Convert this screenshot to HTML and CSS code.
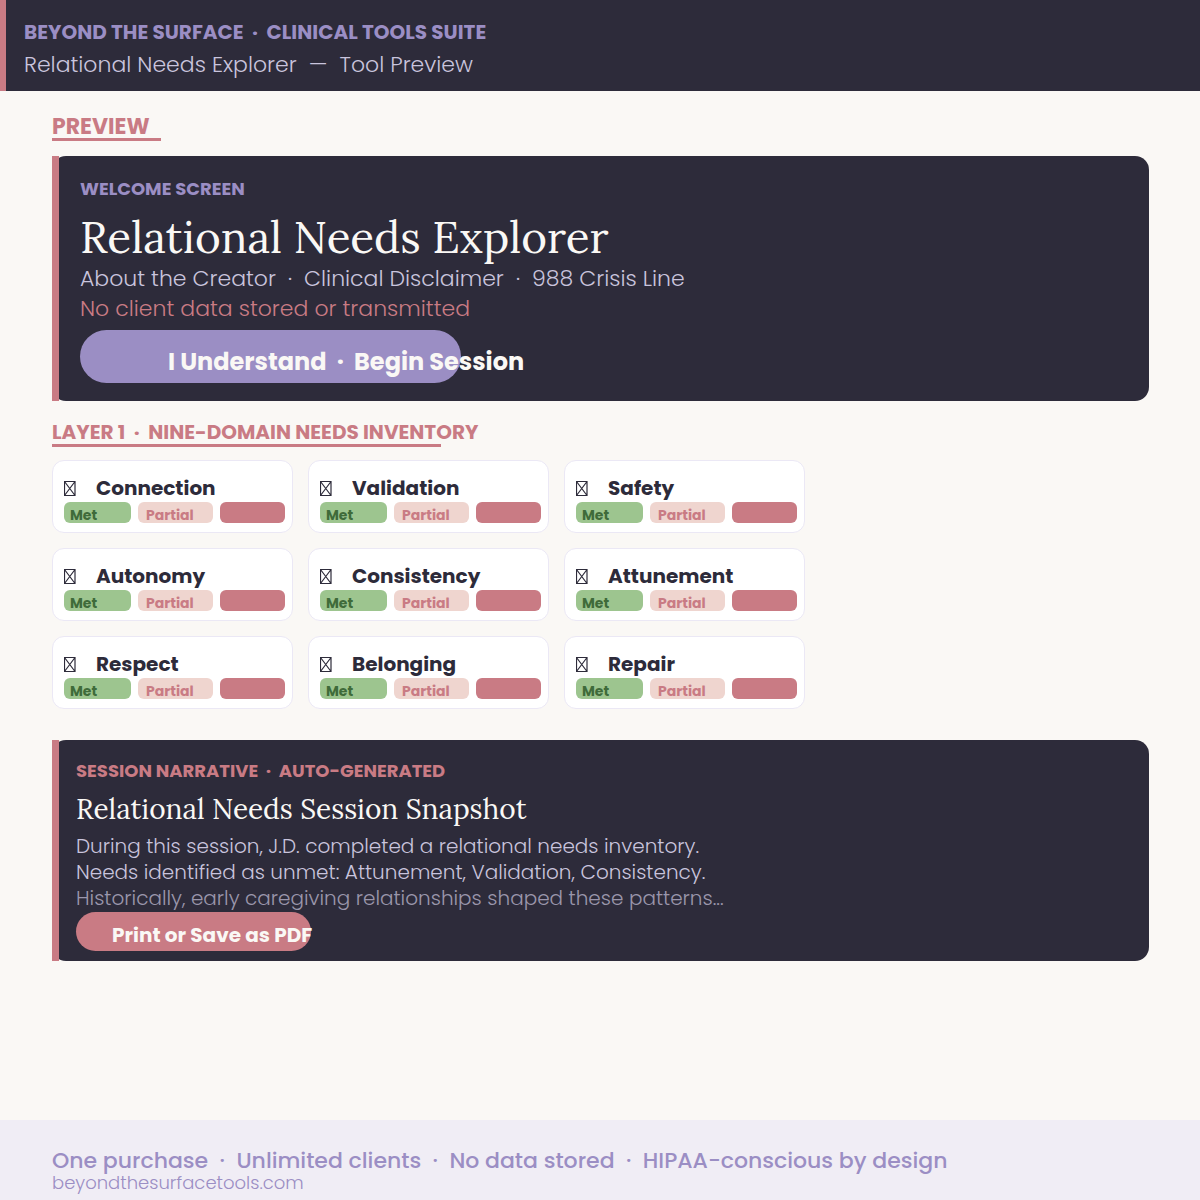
FILE: index.html
```html
<!DOCTYPE html>
<html lang="en">
<head>
    <meta charset="UTF-8">
    <title>Relational Needs Explorer</title>
    <link rel="stylesheet" href="styles.css">
</head>
<body>
    <svg class="svg-defs" width="0" height="0">
        <symbol id="tofu" viewBox="0 0 12 15">
            <path d="M.5.5h10.5v14H.5zM.5.5l10.5 14M11 .5L.5 14.5" fill="none" stroke="currentColor" stroke-width="1.2"/>
        </symbol>
    </svg>

    <header class="top-bar">
        <div class="brand">BEYOND THE SURFACE &nbsp;·&nbsp; CLINICAL TOOLS SUITE</div>
        <div class="top-sub">Relational Needs Explorer &nbsp;—&nbsp; Tool Preview</div>
    </header>

    <main class="content">
        <h2 class="section-label preview-label"><span>PREVIEW</span></h2>

        <section class="dark-card welcome">
            <div class="eyebrow">WELCOME SCREEN</div>
            <h1>Relational Needs Explorer</h1>
            <p class="links">About the Creator &nbsp;·&nbsp; Clinical Disclaimer &nbsp;·&nbsp; 988 Crisis Line</p>
            <p class="warn">No client data stored or transmitted</p>
            <div class="begin-btn">I Understand &nbsp;·&nbsp; Begin Session</div>
        </section>

        <h2 class="section-label layer-label"><span>LAYER 1 &nbsp;·&nbsp; NINE-DOMAIN NEEDS INVENTORY</span></h2>

        <div class="needs-grid">
            <div class="need-card"><div class="need-title"><span class="glyph"><svg width="12" height="15"><use href="#tofu"/></svg></span>Connection</div><div class="pills"><span class="pill met">Met</span><span class="pill partial">Partial</span><span class="pill unmet">Unmet</span></div></div>
            <div class="need-card"><div class="need-title"><span class="glyph"><svg width="12" height="15"><use href="#tofu"/></svg></span>Validation</div><div class="pills"><span class="pill met">Met</span><span class="pill partial">Partial</span><span class="pill unmet">Unmet</span></div></div>
            <div class="need-card"><div class="need-title"><span class="glyph"><svg width="12" height="15"><use href="#tofu"/></svg></span>Safety</div><div class="pills"><span class="pill met">Met</span><span class="pill partial">Partial</span><span class="pill unmet">Unmet</span></div></div>
            <div class="need-card"><div class="need-title"><span class="glyph"><svg width="12" height="15"><use href="#tofu"/></svg></span>Autonomy</div><div class="pills"><span class="pill met">Met</span><span class="pill partial">Partial</span><span class="pill unmet">Unmet</span></div></div>
            <div class="need-card"><div class="need-title"><span class="glyph"><svg width="12" height="15"><use href="#tofu"/></svg></span>Consistency</div><div class="pills"><span class="pill met">Met</span><span class="pill partial">Partial</span><span class="pill unmet">Unmet</span></div></div>
            <div class="need-card"><div class="need-title"><span class="glyph"><svg width="12" height="15"><use href="#tofu"/></svg></span>Attunement</div><div class="pills"><span class="pill met">Met</span><span class="pill partial">Partial</span><span class="pill unmet">Unmet</span></div></div>
            <div class="need-card"><div class="need-title"><span class="glyph"><svg width="12" height="15"><use href="#tofu"/></svg></span>Respect</div><div class="pills"><span class="pill met">Met</span><span class="pill partial">Partial</span><span class="pill unmet">Unmet</span></div></div>
            <div class="need-card"><div class="need-title"><span class="glyph"><svg width="12" height="15"><use href="#tofu"/></svg></span>Belonging</div><div class="pills"><span class="pill met">Met</span><span class="pill partial">Partial</span><span class="pill unmet">Unmet</span></div></div>
            <div class="need-card"><div class="need-title"><span class="glyph"><svg width="12" height="15"><use href="#tofu"/></svg></span>Repair</div><div class="pills"><span class="pill met">Met</span><span class="pill partial">Partial</span><span class="pill unmet">Unmet</span></div></div>
        </div>

        <section class="dark-card narrative">
            <div class="eyebrow rose">SESSION NARRATIVE &nbsp;·&nbsp; AUTO-GENERATED</div>
            <h3>Relational Needs Session Snapshot</h3>
            <p class="line">During this session, J.D. completed a relational needs inventory.</p>
            <p class="line">Needs identified as unmet: Attunement, Validation, Consistency.</p>
            <p class="line faded">Historically, early caregiving relationships shaped these patterns...</p>
            <div class="print-btn">Print or Save as PDF</div>
        </section>
    </main>

    <footer class="page-foot">
        <div class="foot-main">One purchase &nbsp;·&nbsp; Unlimited clients &nbsp;·&nbsp; No data stored &nbsp;·&nbsp; HIPAA-conscious by design</div>
        <div class="foot-url">beyondthesurfacetools.com</div>
    </footer>
</body>
</html>
```
FILE: styles.css
```css
* {
    box-sizing: border-box;
}
html, body {
    margin: 0;
    height: 1200px;
}
body {
    display: flex;
    flex-direction: column;
    background: #faf8f5;
    color: #2d2b3a;
    font-family: "Poppins", "Inter", sans-serif;
    overflow: hidden;
}
p, h1, h2, h3 {
    margin: 0;
    font-weight: normal;
}
.svg-defs {
    display: block;
    height: 0;
}
.top-bar {
    height: 91px;
    padding: 18px 18px 0;
    background: #2d2b3a;
    border-left: 6px solid #c97b84;
}
.brand {
    font-size: 20px;
    line-height: 28px;
    font-weight: 700;
    color: #9b8ec4;
}
.top-sub {
    margin-top: 3px;
    font-size: 22px;
    line-height: 32px;
    font-weight: 300;
    color: #c9c4dd;
}
.content {
    flex: 1;
    padding: 21px 51px 0 52px;
}
.section-label span {
    display: block;
    font-weight: 700;
    color: #c97b84;
    white-space: nowrap;
}
.preview-label {
    width: 109px;
    height: 29px;
    border-bottom: 3px solid #c97b84;
    font-size: 22px;
    line-height: 30px;
}
.layer-label {
    width: 389px;
    height: 29px;
    margin-top: 17px;
    border-bottom: 3px solid #c97b84;
    font-size: 20px;
    line-height: 28px;
}
.dark-card {
    position: relative;
    background: #2d2b3a;
    border-radius: 14px;
}
/* rose bar sits over the rounded left edge of the card */
.dark-card::before {
    content: "";
    position: absolute;
    top: 0;
    bottom: 0;
    left: 0;
    width: 7px;
    background: #c97b84;
}
.welcome {
    height: 245px;
    margin-top: 15px;
    padding: 20px 21px 0 28px;
}
.eyebrow {
    font-size: 18px;
    line-height: 26px;
    font-weight: 700;
    color: #9b8ec4;
}
.eyebrow.rose {
    color: #c97b84;
}
.welcome h1 {
    margin-top: 9px;
    font-family: "Lora", "Liberation Serif", serif;
    font-size: 44px;
    line-height: 53px;
    color: #faf8f5;
}
.links {
    font-size: 22px;
    line-height: 30px;
    font-weight: 300;
    color: #c9c4dd;
}
.warn {
    font-size: 22px;
    line-height: 30px;
    font-weight: 300;
    color: #c97b84;
}
.begin-btn {
    width: 381px;
    height: 53px;
    margin-top: 6px;
    padding: 16px 0 0 88px;
    border-radius: 27px;
    background: #9b8ec4;
    font-size: 24px;
    line-height: 32px;
    font-weight: 700;
    color: #faf8f5;
    white-space: nowrap;
}
.needs-grid {
    display: grid;
    grid-template-columns: repeat(3, 241px);
    grid-auto-rows: 73px;
    gap: 15px;
    margin-top: 13px;
}
.need-card {
    padding: 12px 7px 0 11px;
    background: #fff;
    border: 1px solid #ebe8f5;
    border-radius: 12px;
}
.need-title {
    display: flex;
    align-items: center;
    height: 29px;
    font-size: 20px;
    font-weight: 700;
}
.glyph {
    display: flex;
    width: 32px;
    padding-top: 2px;
}
.pills {
    display: flex;
    gap: 7px;
}
.pill {
    height: 21px;
    padding: 6px 0 0 6px;
    border-radius: 6px;
    font-size: 14px;
    line-height: 14px;
    font-weight: 700;
}
.met {
    width: 67px;
    background: #9dc58f;
    color: #3f6b3a;
}
.partial {
    width: 75px;
    padding-left: 8px;
    background: #efd5cf;
    color: #c97b84;
}
.unmet {
    width: 65px;
    background: #c97b84;
    color: #c97b84;
}
.narrative {
    height: 221px;
    margin-top: 31px;
    padding: 18px 17px 0 24px;
}
.narrative h3 {
    margin-top: 5px;
    font-family: "Lora", "Liberation Serif", serif;
    font-size: 28px;
    line-height: 40px;
    color: #faf8f5;
}
.line {
    font-size: 20px;
    line-height: 26px;
    font-weight: 300;
    color: #c9c4dd;
}
h3 + .line {
    margin-top: 4px;
}
.faded {
    opacity: 0.7;
}
.print-btn {
    width: 235px;
    height: 39px;
    margin-top: 1px;
    padding: 9px 0 0 36px;
    border-radius: 20px;
    background: #c97b84;
    font-size: 20px;
    line-height: 28px;
    font-weight: 700;
    color: #faf8f5;
    white-space: nowrap;
}
.page-foot {
    height: 80px;
    padding: 25px 52px 0;
    background: #f0edf5;
}
.foot-main {
    font-size: 22px;
    line-height: 31px;
    font-weight: 500;
    color: #9b8ec4;
}
.foot-url {
    height: 14px;
    font-size: 18px;
    line-height: 14px;
    font-weight: 300;
    color: #9b8ec4;
}
```
